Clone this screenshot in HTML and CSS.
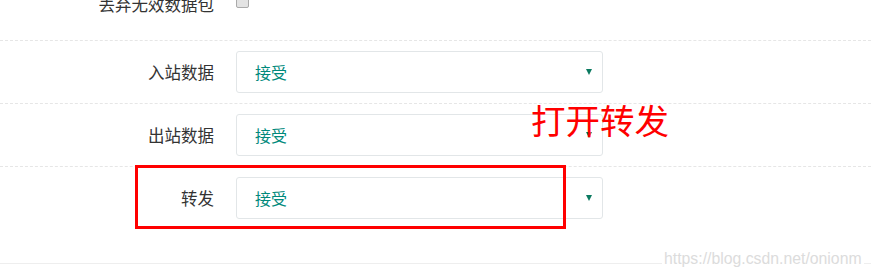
FILE: index.html
```html
<!DOCTYPE html>
<html>
<head>
<meta charset="utf-8">
<link rel="stylesheet" href="styles.css">
</head>
<body>
<div class="page">
  <div class="form">
    <div class="row row-top">
      <label class="label">丢弃无效数据包</label>
      <span class="checkbox"></span>
    </div>
    <div class="row">
      <label class="label">入站数据</label>
      <div class="select"><span>接受</span><i class="caret"></i></div>
    </div>
    <div class="row">
      <label class="label">出站数据</label>
      <div class="select"><span>接受</span><i class="caret"></i></div>
    </div>
    <div class="row row-last">
      <label class="label">转发</label>
      <div class="select"><span>接受</span><i class="caret"></i></div>
    </div>
  </div>
  <div class="note">打开转发</div>
  <div class="highlight"></div>
  <div class="watermark">https://blog.csdn.net/onionm</div>
</div>
</body>
</html>
```
FILE: styles.css
```css
html, body {
  margin: 0;
  padding: 0;
  background: #fff;
}
.page {
  position: relative;
  width: 871px;
  height: 278px;
  overflow: hidden;
  font-family: "Noto Sans CJK SC", "Microsoft YaHei", sans-serif;
}
.form {
  border-bottom: 1px solid #eeeeee;
}
.row {
  display: flex;
  align-items: center;
  padding: 10px 0 10px;
  border-top: 1px dashed #e6e6e6;
}
.row-top {
  border-top: none;
  box-sizing: border-box;
  padding: 0;
  align-items: flex-start;
  margin-top: -8px;
  height: 48px;
}
.row-last {
  padding-bottom: 44px;
}
.label {
  width: 214px;
  padding-right: 22px;
  text-align: right;
  font-size: 16.5px;
  color: #333;
  line-height: 24px;
  flex: none;
}
.checkbox {
  display: block;
  width: 11px;
  height: 11px;
  margin-top: 3px;
  border: 1px solid #aaa;
  border-radius: 2px;
  background: #e3e3e3;
}
.select {
  width: 367px;
  height: 42px;
  box-sizing: border-box;
  border: 1px solid #e2e6e8;
  border-radius: 3px;
  display: flex;
  align-items: center;
  justify-content: space-between;
  padding: 0 10px 0 18px;
  font-size: 16px;
  color: #00897b;
}
.caret {
  width: 0;
  height: 0;
  border-left: 3px solid transparent;
  border-right: 3px solid transparent;
  border-top: 6px solid #0b7a60;
}
.note {
  position: absolute;
  left: 531px;
  top: 97px;
  font-size: 34.5px;
  line-height: 44px;
  color: #ff0000;
}
.highlight {
  position: absolute;
  left: 135px;
  top: 165px;
  width: 431px;
  height: 64px;
  box-sizing: border-box;
  border: 3px solid #ff0000;
}
.watermark {
  position: absolute;
  left: 662px;
  top: 250px;
  font-family: "Liberation Sans", Arial, sans-serif;
  font-size: 15.8px;
  line-height: 18px;
  color: #dcdcdc;
  background: #fff;
  padding: 0 2px;
}
```
